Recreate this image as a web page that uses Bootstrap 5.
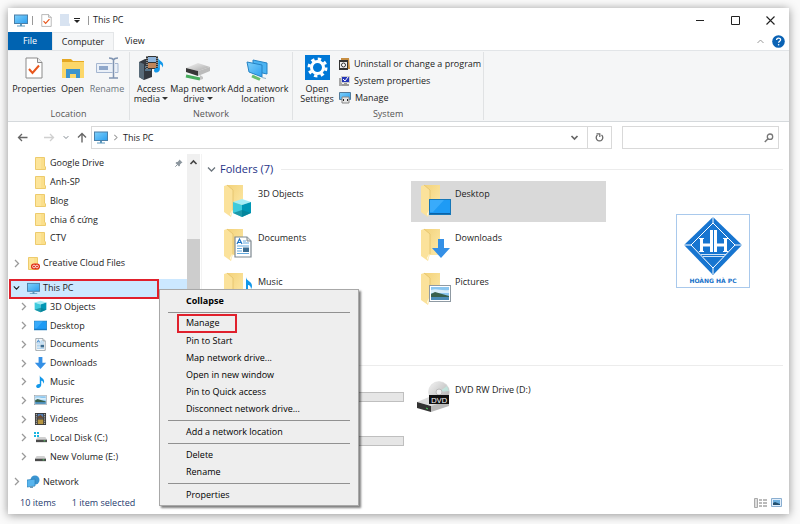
<!DOCTYPE html>
<html lang="en">
<head>
<meta charset="utf-8">
<meta name="viewport" content="width=device-width, initial-scale=1">
<title>This PC</title>
<link rel="stylesheet" href="https://cdn.jsdelivr.net/npm/bootstrap@5.3.0/dist/css/bootstrap.min.css">
<style>
body{font-family:"Open Sans","Noto Sans",sans-serif;font-size:9px;line-height:10px;color:#1c1c1c;background:#fafafa;padding:8px 11px 10px 8px}
button{font:inherit;color:inherit;background:none;border:0;padding:0}
svg{display:block;flex:none}
a{color:inherit;text-decoration:none}
.explorer{background:#fff;box-shadow:0 1px 9px rgba(0,0,0,.42)}
.titlebar{height:24px;padding:0 14px 0 6px}
.win-buttons{gap:26px}
.vline{width:1px;height:9px;background:#999}
.tabs{height:18px}
.tab{height:18px;padding:0 11px}
.tab-file{width:44px;background:#0063b1;color:#fff}
.tab-on{width:62px;background:#f5f6f7;border:1px solid #e4e6e8;border-bottom:0}
.ribbon{background:#f5f6f7;border-top:1px solid #e2e5e8;border-bottom:1px solid #d5d9dc;height:72px}
.ribbon-group{border-right:1px solid #e0e2e4;padding:3px 2px 0;margin:1px 0}
.group-name{color:#555;line-height:12px}
.big-btn svg{margin:0 auto 3px}
.big-btn{display:flex;flex-direction:column;text-align:center;white-space:nowrap}
.w-prop{width:44px}.w-open{width:33px}.w-ren{width:36px}.w-acc{width:38px}.w-map{width:56px}.w-add{width:64px}.w-set{width:36px}
.small-btn{height:17px;white-space:nowrap}
.caret-s{display:inline-block;border:3px solid transparent;border-top-color:#333;border-bottom:0;vertical-align:2px}
.address{height:32px;padding:4px 10px 5px 9px}
.field{border:1px solid #d9d9d9;height:23px;background:#fff}
.field input{border:0;outline:0;min-width:0;background:transparent}
.path-box{padding-left:2px}
.search-box{width:157px;margin-left:10px}
.refresh{width:24px;height:21px;border-left:1px solid #d9d9d9}
.tree{width:179px;min-height:337px}
.tree-row{flex:3 1 0;padding-left:12px}
.tree-gap{flex:1 1 0}
.lv1{padding-left:5px}
.chev{width:7px;margin-right:7px}
.tree-row .ico{width:13px;margin-right:3px}
.picked{background:#cce8ff;position:relative;margin-left:1px;padding-left:4px}
.picked::after{content:"";position:absolute;left:0;top:0;bottom:-1px;width:150px;border:2px solid #e0202c}
.scroll{width:13px;background:#f0f0f0}
.scroll-thumb{background:#cdcdcd;height:140px;margin-top:68px}
.content{border-left:1px solid #f3f3f3;margin-left:1px;padding:8px 6px 0 5px}
.section-head{color:#1e3287;font-size:11px;line-height:14px}
.rule{height:1px;background:#ececec}
.tiles{display:grid;grid-template-columns:195px 195px;gap:3px 2px;padding-left:7px;margin-top:5px}
.tile{height:41px;padding:3px 9px;text-align:left}
.tile svg{margin-right:4px}
.tile-name{padding-top:5px}
.tile-on{background:#d9d9d9}
.meter{height:10px;width:146px;background:#e6e6e6;border:1px solid #bfbfbf;margin:12px 0 0 35px}
.section-gap{margin-top:48px;height:14px}
.status{color:#1e3a6e;height:23px;padding:0 7px 0 12px}
.ctx{position:absolute;left:151px;top:281px;width:200px;background:#eee;border:1px solid #a8a8a8;box-shadow:2px 2px 2px rgba(0,0,0,.5);padding:2px 8px;z-index:3;color:#000}
.ctx button{height:17px;padding-left:18px;text-align:left;display:block;width:100%}
.ctx hr{margin:3px 0 2px;border-top:1px solid #919191;opacity:1}
.boxed{display:inline-block;outline:2px solid #e0202c;outline-offset:0;margin-left:-7px;padding:2px 15px 3px 7px}
.logo-box{position:absolute;left:668px;top:206px;width:74px;border:1px solid #a9c9ec;background:#fff;padding:1px}
.logo-box text{font-family:"DejaVu Sans","Noto Sans",sans-serif;font-weight:700;font-size:6px;fill:#1570c8}
</style>
<script src="https://cdn.jsdelivr.net/npm/bootstrap@5.3.0/dist/js/bootstrap.bundle.min.js"></script>
</head>
<body class="min-vh-100 d-flex">
<svg width="0" height="0" class="position-absolute" aria-hidden="true">
<defs>
<linearGradient id="gs" x1="0" y1="0" x2="1" y2="1"><stop offset="0" stop-color="#7fd0fa"/><stop offset="1" stop-color="#2b9ff0"/></linearGradient>
<linearGradient id="gf" x1="0" y1="0" x2="1" y2="1"><stop offset="0" stop-color="#f3d27a"/><stop offset="1" stop-color="#fde9a9"/></linearGradient>
<linearGradient id="gm" x1="0" y1="0" x2="1" y2="1"><stop offset="0" stop-color="#f4f4f4"/><stop offset="1" stop-color="#a9a9a9"/></linearGradient>
<symbol id="pc" viewBox="0 0 14 13"><rect x=".5" y="1" width="13" height="8.500" fill="url(#gs)" stroke="#4a7fa8"/><path d="M6 10h2v1.500h3v1H3v-1h3z" fill="#5b98bd"/></symbol>
<symbol id="doc" viewBox="0 0 18 22"><path d="M1 1h11.500l4.500 4.500V21H1z" fill="#fff" stroke="#8b8b8b"/><path d="M12.500 1v4.500H17" fill="#eee" stroke="#8b8b8b"/><path d="M4 12l3.500 4L14 8.500" fill="none" stroke="#e8571d" stroke-width="2"/></symbol>
<symbol id="fold" viewBox="0 0 11 13"><path d="M.5.500h9V9l1 1v2.500H.5z" fill="#fbdf8b" stroke="#edcb6d"/><path d="M1 1h5v11H1z" fill="#ffe9a5" opacity=".6"/></symbol>
<symbol id="big" viewBox="0 0 31 35"><path d="M4 1h16v26H10z" fill="url(#gf)"/><path d="M1 2l3-1 6 5v20l-2 7-7-5z" fill="#fbe29b"/><path d="M4 1l6 5v20" fill="none" stroke="#e3c26a" stroke-width=".8"/><path d="M9 26l-2 4 1 2z" fill="#fffdf0"/></symbol>
<symbol id="cube" viewBox="0 0 20 20"><path d="M1 4l9-3 9 3-9 3z" fill="#a5edf6"/><path d="M1 4l9 3v12l-9-4z" fill="#3fcbdd"/><path d="M19 4l-9 3v12l9-4z" fill="#0097b5"/><path d="M1 15l9-3 9 3-9 4z" fill="#087c8f" opacity=".65"/></symbol>
<symbol id="desk" viewBox="0 0 22 16"><rect x=".5" y=".5" width="21" height="15" fill="#1e9bf5" stroke="#1677b8"/><path d="M1 1h14L4 13H1z" fill="#4bb5ff" opacity=".6"/><path d="M1 14.500h20" stroke="#0b62a8"/></symbol>
<symbol id="page" viewBox="0 0 18 22"><path d="M1 1h12l4 4v16H1z" fill="#fff" stroke="#7e8990" stroke-width="1.200"/><path d="M13 1v4h4" fill="#ddd" stroke="#7e8990"/><path d="M3 8l2.500-5L8 8M4 6.500h3" fill="none" stroke="#1d74c4" stroke-width="1.200"/><path d="M9 5h3M9 7h6M3 10h12M3 12.500h5M3 15h5M3 17.500h12" stroke="#63a9de"/><rect x="9" y="11.500" width="6" height="4.500" fill="#3d6d91"/></symbol>
<symbol id="down" viewBox="0 0 18 19"><path d="M6 0h6v9h6l-9 10L0 9h6z" fill="#3490e6"/></symbol>
<symbol id="note" viewBox="0 0 12 18"><path d="M5 0c0 4 6 4 6 9 0 2-1 3-1 3 0-4-3-4-3-4v6c0 2-2 4-4 4s-3-1-3-2.500S2 12 5 12.500z" fill="#1398ea"/></symbol>
<symbol id="pic" viewBox="0 0 22 17"><rect x=".5" y=".5" width="21" height="16" fill="#fff" stroke="#8f9aa3"/><path d="M2 2h18v13H2z" fill="#8bc6ef"/><path d="M2 5c6-2 9 1 18 0v3H2z" fill="#d9eefa"/><path d="M2 9l4-2 14 4v1H2z" fill="#38604c"/><path d="M2 12h18v3H2z" fill="#4a8bb5"/></symbol>
<symbol id="film" viewBox="0 0 12 13"><path d="M0 0h12v13H0z" fill="#383838"/><path d="M3 1h6v5H3z" fill="#567fb4"/><path d="M3 7h6v5H3z" fill="#b69542"/><path d="M1.500 1v11M10.500 1v11" stroke="#e6e6e6" stroke-dasharray="1 1"/><path d="M3 4l3-2 3 3v1H3z" fill="#6c4d32"/></symbol>
<symbol id="disk" viewBox="0 0 13 13"><path d="M2 6h9l2 3H0z" fill="#d1d1d1"/><path d="M0 9h13v3H0z" fill="#4b4b4b"/><path d="M9 10.500h2" stroke="#55e06a"/></symbol>
<symbol id="chr" viewBox="0 0 7 9"><path d="M2 1l3.500 3.500L2 8" fill="none" stroke="#9a9a9a" stroke-width="1.300"/></symbol>
<symbol id="chd" viewBox="0 0 9 7"><path d="M1 1.500L4.500 5 8 1.500" fill="none" stroke="currentColor" stroke-width="1.300"/></symbol>
<symbol id="mon2" viewBox="0 0 25 22"><path d="M8 1l14 3v11L8 12z" fill="#4bb3f2" stroke="#2683c4"/><path d="M2 3l15 3v12L4 13z" fill="url(#gs)" stroke="#2683c4"/><path d="M17 18l4 1v1l-4-1z" fill="#8fb3c8"/><path d="M7 17l8 3.500" stroke="#68bd6d" stroke-width="3"/></symbol>
</defs>
</svg>

<main class="explorer position-relative d-flex flex-column flex-grow-1">
  <header class="titlebar d-flex align-items-center">
    <svg width="14" height="13"><use href="#pc"/></svg>
    <span class="vline ms-1 me-2"></span>
    <svg width="11" height="13"><use href="#doc"/></svg>
    <svg class="ms-2" width="10" height="12" viewBox="0 0 10 12"><path d="M0 0h9v9l1 1v2H0z" fill="#d8e3f1"/></svg>
    <button class="ms-1" aria-label="Customize toolbar"><svg width="6" height="7" viewBox="0 0 6 7"><path d="M0 1.500h6" stroke="#222"/><path d="M0 3h6L3 6z" fill="#222"/></svg></button>
    <span class="vline ms-2 me-1"></span>
    <span>This PC</span>
    <div class="win-buttons ms-auto d-flex align-items-center">
      <button aria-label="Minimize"><svg width="9" height="9" viewBox="0 0 9 9"><path d="M0 4.500h8" stroke="#222"/></svg></button>
      <button aria-label="Maximize"><svg width="9" height="9" viewBox="0 0 9 9"><path d="M.5.500h8v8h-8z" fill="none" stroke="#222"/></svg></button>
      <button aria-label="Close"><svg width="9" height="9" viewBox="0 0 9 9"><path d="M.5.500l8 8M8.500.500l-8 8" stroke="#222" stroke-width="1.100"/></svg></button>
    </div>
  </header>

  <nav class="tabs d-flex align-items-center">
    <button class="tab tab-file px-0">File</button>
    <button class="tab tab-on px-0">Computer</button>
    <button class="tab">View</button>
    <button class="ms-auto me-2" aria-label="Collapse ribbon"><svg width="7" height="5" viewBox="0 0 7 5"><path d="M.5 4l3-3 3 3" fill="none" stroke="#999"/></svg></button>
    <button class="me-1" aria-label="Help"><svg width="13" height="13" viewBox="0 0 13 13"><circle cx="6.500" cy="6.500" r="6.300" fill="#0a62b4"/><path d="M4.600 5c0-2.500 4-2.500 4-.2 0 1.400-2 1.500-2 3" fill="none" stroke="#fff" stroke-width="1.300"/><circle cx="6.600" cy="9.700" r=".8" fill="#fff"/></svg></button>
  </nav>

  <section class="ribbon d-flex">
    <div class="ribbon-group d-flex flex-column justify-content-between align-items-center px-1">
      <div class="d-flex align-items-start">
        <button class="big-btn w-prop"><svg width="26" height="26" viewBox="-4 -2 26 26"><use href="#doc" width="18" height="22"/></svg><span>Properties</span></button>
        <button class="big-btn w-open"><svg width="26" height="26" viewBox="0 0 26 26"><path d="M2 4h9l2 2h11v17H2z" fill="#e5a823"/><path d="M2 7h22v16H2z" fill="#fcd769"/><path d="M6 23v-9h14v9h-4v-4h-6v4z" fill="#3d94cd"/></svg><span>Open</span></button>
        <button class="big-btn w-ren text-secondary"><svg width="26" height="26" viewBox="0 0 26 26"><path d="M18.500 8.500H2.500v9h16M21 8.500h3v9h-3" fill="#eaf0f8" stroke="#a5b6d0"/><path d="M5 11h9v4H5z" fill="#8fa7ca"/><path d="M15 3c3 0 4 1 4.500 2 .5-1 1.500-2 4.500-2M19.500 5v18M15 23h9" fill="none" stroke="#8195b2" stroke-width="1.500"/></svg><span>Rename</span></button>
      </div>
      <div class="group-name">Location</div>
    </div>
    <div class="ribbon-group d-flex flex-column justify-content-between align-items-center">
      <div class="d-flex align-items-start">
        <button class="big-btn w-acc"><svg width="26" height="26" viewBox="0 0 26 26"><path d="M1 7l6-3h7v18l-8 3-5-3z" fill="#343940"/><path d="M1 7l5 2v16l-5-3z" fill="#596b79"/><path d="M7 12h6M7 15h6" stroke="#78b5dd"/><path d="M8 1h12v13H8z" fill="#333"/><path d="M10 2h8v5h-8z" fill="#8db4dc"/><path d="M10 8h8v5h-8z" fill="#c0855a"/><path d="M9 1v13M19 1v13" stroke="#ddd" stroke-dasharray="1 1"/><use href="#note" x="16" y="1" width="10" height="18"/></svg><span>Access<br>media <i class="caret-s"></i></span></button>
        <button class="big-btn w-map"><svg width="26" height="26" viewBox="0 0 26 26"><path d="M1 13l12-5 12 4-12 4z" fill="url(#gm)"/><path d="M1 13l12 3v5L1 17z" fill="#383838"/><path d="M13 16l12-4v4l-12 5z" fill="#bbb"/><path d="M1 21l14 3" stroke="#48ad5e" stroke-width="3"/><path d="M15 20l3 2v2l-3 1z" fill="#c3c3c3"/></svg><span>Map network<br>drive <i class="caret-s"></i></span></button>
        <button class="big-btn w-add"><svg width="26" height="26" viewBox="0 -4 26 26"><use href="#mon2" width="25" height="22"/></svg><span>Add a network<br>location</span></button>
      </div>
      <div class="group-name">Network</div>
    </div>
    <div class="ribbon-group d-flex flex-column justify-content-between align-items-center">
      <div class="d-flex align-items-start ps-1">
        <button class="big-btn w-set"><svg width="25" height="26" viewBox="0 0 25 26"><path d="M0 0h25v25H0z" fill="#0078d7"/><circle cx="12.500" cy="12.500" r="6" fill="none" stroke="#fff" stroke-width="3"/><circle cx="12.500" cy="12.500" r="8.500" fill="none" stroke="#fff" stroke-width="3" stroke-dasharray="3.340 3.340"/></svg><span>Open<br>Settings</span></button>
        <div class="d-flex flex-column ms-1">
          <button class="small-btn d-flex align-items-center gap-1"><svg width="11" height="12" viewBox="0 0 11 12"><path d="M2 0h8l1 11H2z" fill="#c78e42"/><path d="M0 2h9v10H0z" fill="#333"/><path d="M1 4h7v6H1z" fill="#eee"/><circle cx="4.500" cy="7" r="2" fill="#fff" stroke="#333"/></svg>Uninstall or change a program</button>
          <button class="small-btn d-flex align-items-center gap-1"><svg width="11" height="12" viewBox="0 0 11 12"><path d="M0 3h3v8H0z" fill="#a7a7a7"/><path d="M2 1h9v7H2z" fill="#ccc"/><path d="M3 2h7v5H3z" fill="#2436b8"/><path d="M4 4l2 2 3-4" fill="none" stroke="#fff"/><path d="M5 8h3v1h2v2H3V9h2z" fill="#999"/></svg>System properties</button>
          <button class="small-btn d-flex align-items-center gap-1"><svg width="12" height="12" viewBox="0 0 12 12"><path d="M.5.500h11v7H.5z" fill="url(#gs)" stroke="#527b9b"/><path d="M3 5h7v6H3z" fill="#e6e6e6" stroke="#888"/><path d="M4 8h1M8 8h1" stroke="#222" stroke-width="2"/></svg>Manage</button>
        </div>
      </div>
      <div class="group-name">System</div>
    </div>
  </section>

  <section class="address d-flex align-items-center">
    <button class="me-3" aria-label="Back"><svg width="11" height="9" viewBox="0 0 11 9"><path d="M10.500 4.500h-9M5 1L1.500 4.500 5 8" fill="none" stroke="#666" stroke-width="1.300"/></svg></button>
    <button class="me-2" aria-label="Forward"><svg width="11" height="9" viewBox="0 0 11 9"><path d="M0 4.500h9M6 1l3.500 3.500L6 8" fill="none" stroke="#d0d0d0" stroke-width="1.300"/></svg></button>
    <button class="me-2 text-secondary" aria-label="Recent"><svg width="6" height="5"><use href="#chd"/></svg></button>
    <button class="me-1" aria-label="Up"><svg width="10" height="11" viewBox="0 0 10 11"><path d="M5 10.500v-9M1 5.500l4-4 4 4" fill="none" stroke="#666" stroke-width="1.400"/></svg></button>
    <div class="field path-box d-flex align-items-center flex-grow-1">
      <svg class="me-1" width="14" height="13"><use href="#pc"/></svg>
      <svg class="me-1" width="7" height="7"><use href="#chr"/></svg>
      <a href="#">This PC</a>
      <button class="ms-auto me-2 text-secondary" aria-label="Previous locations"><svg width="9" height="7" viewBox="0 0 9 7"><path d="M1.500 2L4.500 5l3-3" fill="none" stroke="#666" stroke-width="1.700"/></svg></button>
      <button class="refresh d-flex align-items-center justify-content-center" aria-label="Refresh"><svg width="9" height="9" viewBox="0 0 9 9"><path d="M6.500 2a3.300 3.300 0 1 1-4 0" fill="none" stroke="#666" stroke-width="1.300"/><path d="M1.500.800h3.300v3.200" fill="none" stroke="#666" stroke-width="1.200"/></svg></button>
    </div>
    <div class="field search-box d-flex align-items-center pe-1">
      <input class="flex-grow-1" type="text" aria-label="Search This PC">
      <svg width="10" height="10" viewBox="0 0 10 10"><circle cx="6" cy="3.700" r="2.700" fill="none" stroke="#777" stroke-width="1.300"/><path d="M4 5.700L.800 9" stroke="#777" stroke-width="1.500"/></svg>
    </div>
  </section>

  <div class="d-flex flex-grow-1">
    <nav class="tree d-flex flex-column">
      <a href="#" class="tree-row d-flex align-items-center"><span class="chev"></span><svg class="ico" height="13"><use href="#fold"/></svg>Google Drive<svg class="ms-auto me-1" width="8" height="8" viewBox="0 0 8 8"><path d="M4.500.500l3 3-1 .5-1.500 1.500v1L4 7.500 .500 4l1-1h1L4 1.500z" fill="#8c969e"/><path d="M2.500 5.500L.300 7.700" stroke="#8c969e"/></svg></a>
      <a href="#" class="tree-row d-flex align-items-center"><span class="chev"></span><svg class="ico" height="13"><use href="#fold"/></svg>Anh-SP</a>
      <a href="#" class="tree-row d-flex align-items-center"><span class="chev"></span><svg class="ico" height="13"><use href="#fold"/></svg>Blog</a>
      <a href="#" class="tree-row d-flex align-items-center"><span class="chev"></span><svg class="ico" height="13"><use href="#fold"/></svg><span lang="vi">chia ổ cứng</span></a>
      <a href="#" class="tree-row d-flex align-items-center"><span class="chev"></span><svg class="ico" height="13"><use href="#fold"/></svg>CTV</a>
      <div class="tree-gap"></div>
      <a href="#" class="tree-row lv1 d-flex align-items-center"><svg class="chev" height="9"><use href="#chr"/></svg><svg class="ico" height="13" viewBox="0 0 13 13"><use href="#fold" x="1" width="11" height="13"/><rect x="4" y="6.500" width="9" height="6" rx="3" fill="#e02b12"/><circle cx="7" cy="9.500" r="1.400" fill="none" stroke="#fff" stroke-width=".8"/><circle cx="10" cy="9.500" r="1.400" fill="none" stroke="#fff" stroke-width=".8"/></svg>Creative Cloud Files</a>
      <div class="tree-gap"></div>
      <a href="#" class="tree-row lv1 picked d-flex align-items-center"><svg class="chev" height="6"><use href="#chd"/></svg><svg class="ico" height="13"><use href="#pc"/></svg>This PC</a>
      <a href="#" class="tree-row d-flex align-items-center"><svg class="chev" height="9"><use href="#chr"/></svg><svg class="ico" height="13"><use href="#cube"/></svg>3D Objects</a>
      <a href="#" class="tree-row d-flex align-items-center"><svg class="chev" height="9"><use href="#chr"/></svg><svg class="ico" height="13"><use href="#desk"/></svg>Desktop</a>
      <a href="#" class="tree-row d-flex align-items-center"><svg class="chev" height="9"><use href="#chr"/></svg><svg class="ico" height="13"><use href="#page"/></svg>Documents</a>
      <a href="#" class="tree-row d-flex align-items-center"><svg class="chev" height="9"><use href="#chr"/></svg><svg class="ico" height="12"><use href="#down"/></svg>Downloads</a>
      <a href="#" class="tree-row d-flex align-items-center"><svg class="chev" height="9"><use href="#chr"/></svg><svg class="ico" height="13"><use href="#note"/></svg>Music</a>
      <a href="#" class="tree-row d-flex align-items-center"><svg class="chev" height="9"><use href="#chr"/></svg><svg class="ico" height="10"><use href="#pic"/></svg>Pictures</a>
      <a href="#" class="tree-row d-flex align-items-center"><svg class="chev" height="9"><use href="#chr"/></svg><svg class="ico" height="12"><use href="#film"/></svg>Videos</a>
      <a href="#" class="tree-row d-flex align-items-center"><svg class="chev" height="9"><use href="#chr"/></svg><svg class="ico" height="13" viewBox="0 0 13 13"><use href="#disk" x="2" y="1" width="11" height="11"/><path d="M0 1h2v2H0zM3 1h2v2H3zM0 4h2v2H0zM3 4h2v2H3z" fill="#19b5e0"/></svg>Local Disk (C:)</a>
      <a href="#" class="tree-row d-flex align-items-center"><svg class="chev" height="9"><use href="#chr"/></svg><svg class="ico" height="11"><use href="#disk"/></svg>New Volume (E:)</a>
      <div class="tree-gap"></div>
      <a href="#" class="tree-row lv1 d-flex align-items-center"><svg class="chev" height="9"><use href="#chr"/></svg><svg class="ico" height="13" viewBox="0 0 13 13"><circle cx="8" cy="5" r="4.500" fill="#3a94d0"/><path d="M0 5l8-1v7l-8 1z" fill="#58b5ee" stroke="#2c7fb8" stroke-width=".7"/><path d="M3 11h3v2H3z" fill="#6a9cbd"/></svg>Network</a>
    </nav>
    <div class="scroll" aria-hidden="true">
      <svg class="mx-auto" width="9" height="17" viewBox="0 0 9 17"><path d="M1.500 10l3-3 3 3" fill="none" stroke="#444" stroke-width="1.600"/></svg>
      <div class="scroll-thumb"></div>
    </div>
    <section class="content flex-grow-1">
      <div class="d-flex align-items-center section-head">
        <svg class="me-1 text-secondary" width="9" height="7"><use href="#chd"/></svg>Folders (7)
        <div class="rule flex-grow-1 ms-2"></div>
      </div>
      <div class="tiles">
        <button class="tile d-flex"><svg width="31" height="35" viewBox="0 0 31 35"><use href="#big" width="31" height="35"/><use href="#cube" x="9" y="14" width="20" height="20"/></svg><span class="tile-name">3D Objects</span></button>
        <button class="tile tile-on d-flex"><svg width="31" height="35" viewBox="0 0 31 35"><use href="#big" width="31" height="35"/><use href="#desk" x="9" y="15" width="22" height="16"/></svg><span class="tile-name">Desktop</span></button>
        <button class="tile d-flex"><svg width="31" height="35" viewBox="0 0 31 35"><use href="#big" width="31" height="35"/><use href="#page" x="11" y="8" width="18" height="22"/></svg><span class="tile-name">Documents</span></button>
        <button class="tile d-flex"><svg width="31" height="35" viewBox="0 0 31 35"><use href="#big" width="31" height="35"/><use href="#down" x="12" y="11" width="18" height="19"/></svg><span class="tile-name">Downloads</span></button>
        <button class="tile d-flex"><svg width="31" height="35" viewBox="0 0 31 35"><use href="#big" width="31" height="35"/><use href="#note" x="18" y="5" width="12" height="18"/></svg><span class="tile-name">Music</span></button>
        <button class="tile d-flex"><svg width="31" height="35" viewBox="0 0 31 35"><use href="#big" width="31" height="35"/><use href="#pic" x="9" y="13" width="22" height="17"/></svg><span class="tile-name">Pictures</span></button>
      </div>
      <div class="section-gap d-flex align-items-center"><div class="rule flex-grow-1"></div></div>
      <div class="tiles">
        <div class="tile"><div class="meter"></div></div>
        <button class="tile d-flex ps-1"><svg width="36" height="34" viewBox="0 0 36 34"><circle cx="24" cy="12" r="10.500" fill="url(#gm)" stroke="#ddd" stroke-width=".5"/><path d="M24 12l8-6 2 5z" fill="#bdeee4" opacity=".7"/><circle cx="24" cy="12" r="3" fill="#eee" stroke="#bbb"/><path d="M2 22l12-5 20 3-17 6z" fill="#ddd"/><path d="M2 22l14 4v6L2 28z" fill="#333"/><path d="M16 26l18-6v6l-18 6z" fill="#b9b9b9"/><path d="M11 28l2 1" stroke="#48d45d"/><path d="M14 15h20v9H14z" fill="#111"/><text x="16" y="23" font-size="8" fill="#fff">DVD</text></svg><span class="tile-name">DVD RW Drive (D:)</span></button>
        <div class="tile"><div class="meter"></div></div>
      </div>
    </section>
  </div>

  <footer class="status d-flex align-items-center">
    <span class="me-3">10 items</span><span>1 item selected</span>
    <button class="ms-auto me-1" aria-label="Details view"><svg width="13" height="10" viewBox="0 0 13 10"><path d="M.5.500h3v9h-3z" fill="#ddd" stroke="#aaa"/><path d="M5 2h3M9 2h4M5 5h3M9 5h4M5 8h3M9 8h4" stroke="#777"/></svg></button>
    <button aria-label="Large icons view"><svg width="11" height="9" viewBox="0 0 11 9"><path d="M.5.500h10v8H.5z" fill="#e1eefb" stroke="#8aaed0"/><path d="M2 2h7v5H2z" fill="#6baede"/><path d="M2 5l2-1 5 2v1H2z" fill="#24506f"/></svg></button>
  </footer>

  <div class="logo-box">
    <svg width="70" height="70" viewBox="0 0 70 70"><path d="M35 1l29 28-29 30L6 29z" fill="#1775d0"/><path d="M35 7l22 22-22 23-22-23z" fill="none" stroke="#fff" stroke-width="1"/><path d="M35 1v6M35 52v6M6 29h7M57 29h7" stroke="#fff"/><path d="M23.500 22v14M33.500 14v22M23 29h10M37.500 14v22M47.500 22v14M38 29h10" stroke="#fff" stroke-width="3"/><path d="M21 22.500h5M21 35.500h5M45 22.500h5M45 35.500h5" stroke="#fff"/><path d="M23 38.500h25M25 40.500h21" stroke="#fff" stroke-width=".8"/><text x="35" y="67" text-anchor="middle" lang="vi">HOÀNG HÀ PC</text></svg>
  </div>

  <div class="ctx" role="menu">
    <button role="menuitem" class="fw-bold">Collapse</button>
    <hr>
    <button role="menuitem"><span class="boxed">Manage</span></button>
    <button role="menuitem">Pin to Start</button>
    <button role="menuitem">Map network drive...</button>
    <button role="menuitem">Open in new window</button>
    <button role="menuitem">Pin to Quick access</button>
    <button role="menuitem">Disconnect network drive...</button>
    <hr>
    <button role="menuitem">Add a network location</button>
    <hr>
    <button role="menuitem">Delete</button>
    <button role="menuitem">Rename</button>
    <hr>
    <button role="menuitem">Properties</button>
  </div>
</main>
</body>
</html>
